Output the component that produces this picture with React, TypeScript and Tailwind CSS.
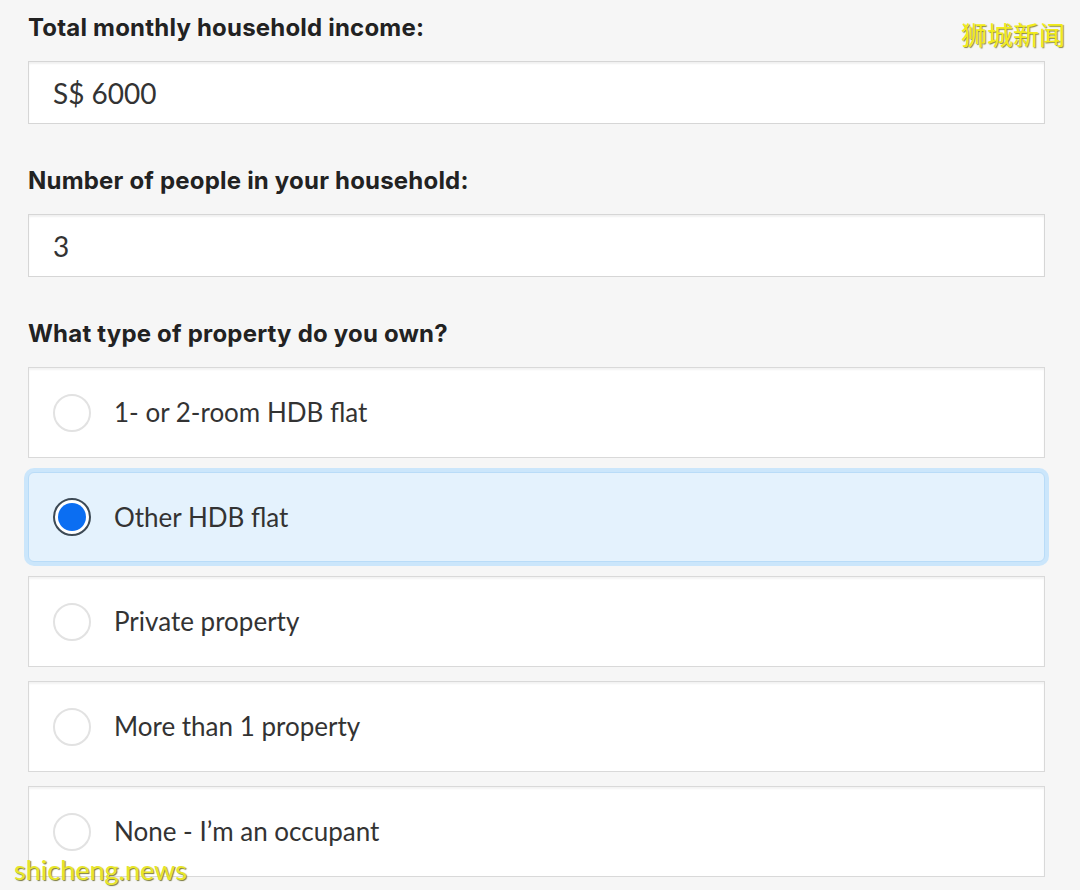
import React from 'react';

const options = [
  '1- or 2-room HDB flat',
  'Other HDB flat',
  'Private property',
  'More than 1 property',
  'None - I\u2019m an occupant',
];

const Radio: React.FC<{ checked: boolean }> = ({ checked }) =>
  checked ? (
    <span className="flex h-[38px] w-[38px] items-center justify-center rounded-full border-2 border-[#3d4a55] bg-white">
      <span className="h-[28px] w-[28px] rounded-full bg-[#0b6ef2]" />
    </span>
  ) : (
    <span className="h-[38px] w-[38px] rounded-full border-2 border-[#e2e2e2] bg-white" />
  );

const labelCls = 'text-[24px] font-bold leading-[32px] tracking-[0.2px] text-[#222] [font-family:Inter,sans-serif]';

export default function App() {
  const selected = 1;
  return (
    <div
      className="relative h-[890px] w-[1080px] overflow-hidden bg-[#f6f6f6] pl-[28px] pr-[35px] pt-[12px] text-[#2b2b2b]"
      style={{ fontFamily: 'Lato, "Liberation Sans", sans-serif' }}
    >
      <div className={labelCls}>Total monthly household income:</div>
      <div className="mt-[17px] flex h-[63px] items-center border border-[#d6d6d6] bg-white pl-[24px] text-[28px] text-[#333] shadow-[inset_0_2px_2px_rgba(0,0,0,0.06)]">
        S$ 6000
      </div>

      <div className={`mt-[41px] ${labelCls}`}>Number of people in your household:</div>
      <div className="mt-[17px] flex h-[63px] items-center border border-[#d6d6d6] bg-white pl-[24px] text-[28px] text-[#333] shadow-[inset_0_2px_2px_rgba(0,0,0,0.06)]">
        3
      </div>

      <div className={`mt-[41px] ${labelCls}`}>What type of property do you own?</div>
      <div className="mt-[17px] flex flex-col gap-[14px]">
        {options.map((o, i) => (
          <div
            key={o}
            className={
              i === selected
                ? 'flex h-[90px] items-center gap-[23px] rounded-[6px] border border-[#b9dcf8] bg-[#e4f2fd] pl-[24px] shadow-[0_0_0_4px_#cbe6fb]'
                : 'flex h-[91px] items-center gap-[23px] border border-[#d9d9d9] bg-white pl-[24px] shadow-[inset_0_2px_2px_rgba(0,0,0,0.05)]'
            }
          >
            <Radio checked={i === selected} />
            <span className="text-[26px] text-[#333]">{o}</span>
          </div>
        ))}
      </div>

      <div
        className="absolute right-[15px] top-[14px] text-[26px] text-[#f2ec1a] [text-shadow:1px_1px_1px_#8a8a40]"
        style={{ fontFamily: '"Noto Sans CJK SC", sans-serif' }}
      >
        狮城新闻
      </div>
      <div className="absolute bottom-[4px] left-[14px] text-[27px] leading-[32px] text-[#e8e62a] [text-shadow:1px_1px_1px_#7a7a3a]">
        shicheng.news
      </div>
    </div>
  );
}
